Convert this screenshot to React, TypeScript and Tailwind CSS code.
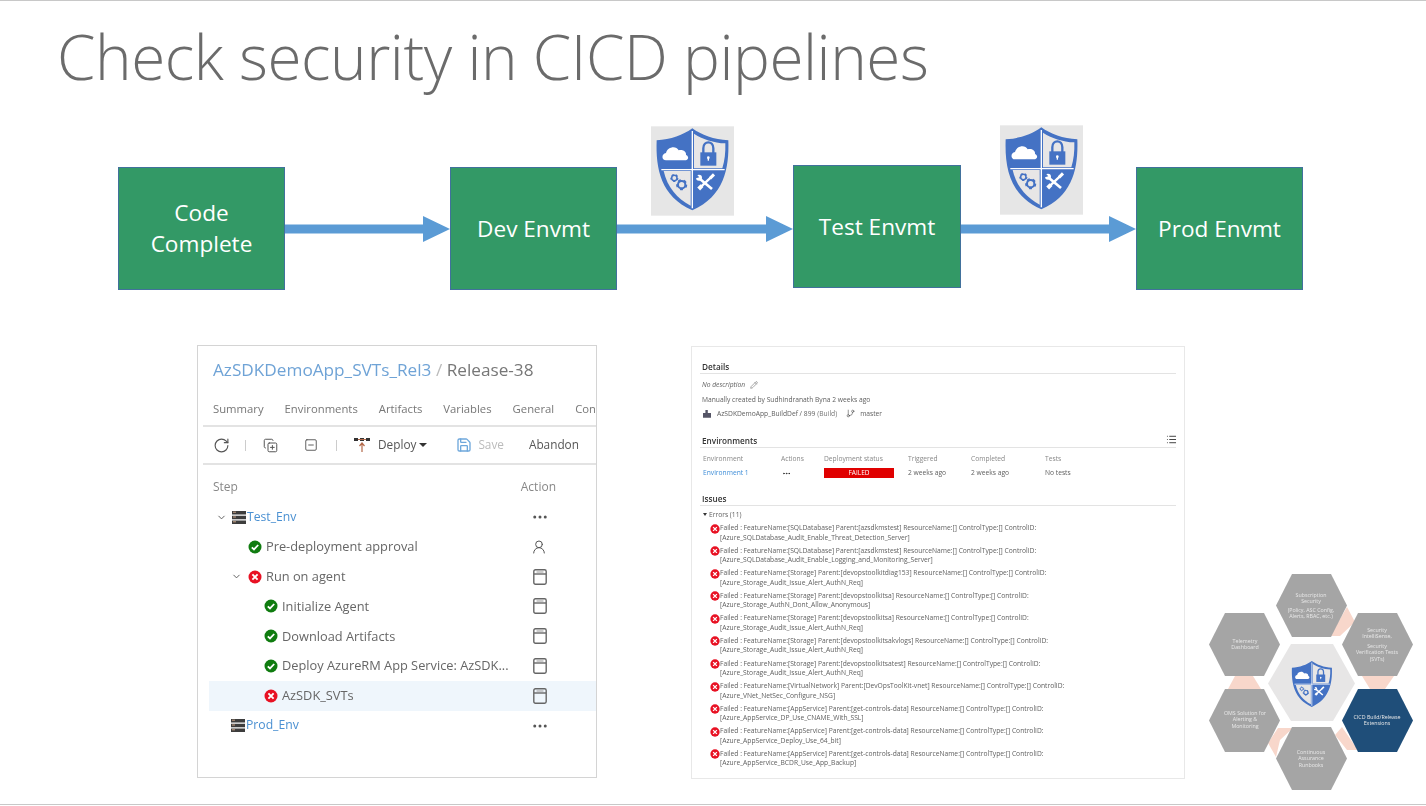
import { ChevronDown, CopyPlus, Ellipsis, GitBranch, List, Pencil, RotateCw, Save, SquareMinus, UserRound } from "lucide-react";

const shieldBlue = "#4472c4";

const Gear = ({ cx, cy, r }: { cx: number; cy: number; r: number }) => (
  <>
    <circle cx={cx} cy={cy} r={r} fill="none" stroke={shieldBlue} strokeWidth={r * 0.55} />
    <circle cx={cx} cy={cy} r={r * 1.3} fill="none" stroke={shieldBlue} strokeWidth={r * 0.45} strokeDasharray={`${r * 0.8} ${r * 0.84}`} />
  </>
);

const Shield = () => (
  <>
    <path d="M157 28C130 48 92 62 50 64C47 150 62 232 157 274C252 232 268 150 265 64C222 62 184 48 157 28Z" fill={shieldBlue} />
    <path d="M162 44C186 60 222 72 256 73C257 100 254 126 247 148H162Z" fill="#e7e6e6" />
    <path d="M71 156H152V260C110 238 82 204 71 156Z" fill="#e7e6e6" />
    <path d="M157 36V268M64 152H254" stroke="#fff" strokeWidth="4" />
    <path d="M78 124C64 124 64 104 78 102C82 84 108 78 116 94C128 90 140 98 138 108C148 112 146 124 134 124Z" fill="#fff" />
    <path d="M190 102V88C190 64 220 64 220 88V102" fill="none" stroke={shieldBlue} strokeWidth="7" />
    <rect x="181" y="100" width="48" height="40" fill={shieldBlue} />
    <circle cx="205" cy="116" r="4" fill="#fff" />
    <rect x="203" y="116" width="4" height="9" fill="#fff" />
    <Gear cx={103} cy={177} r={8} />
    <Gear cx={125} cy={197} r={11} />
    <path d="M180 180L216 210" stroke="#fff" strokeWidth="8" />
    <path d="M212 176L180 206" stroke="#fff" strokeWidth="7" />
    <path d="M186 200L176 210" stroke="#fff" strokeWidth="12" />
    <path d="M222 166L210 178" stroke="#fff" strokeWidth="9" />
    <circle cx="177" cy="176" r="9" fill="#fff" />
    <path d="M168 164L178 175L168 178Z" fill={shieldBlue} />
  </>
);

const ShieldTile = () => (
  <svg viewBox="33 22 249 268" className="block h-[90px] w-[83px] blur-[0.4px]">
    <rect x="33" y="22" width="249" height="268" fill="#e6e6e6" />
    <Shield />
  </svg>
);

const Arrow = ({ width }: { width: number }) => (
  <svg width={width} height="28" viewBox={`0 0 ${width} 28`} className="block">
    <path d={`M0 9.5H${width - 27}V1L${width} 14L${width - 27} 27V18.5H0Z`} fill="#5b9bd5" />
  </svg>
);

const Box = ({ label, className = "" }: { label: string; className?: string }) => (
  <div className={`flex h-[123px] w-[167px] shrink-0 items-center justify-center border border-[#41719c] bg-[#339966] px-4 text-center text-[22.6px] leading-[31px] text-white ${className}`}>
    {label}
  </div>
);

const Ok = () => (
  <svg width="14" height="14" viewBox="0 0 14 14" className="shrink-0">
    <circle cx="7" cy="7" r="6.5" fill="#107c10" />
    <path d="M3.8 7.3L6 9.4L10.2 5" fill="none" stroke="#fff" strokeWidth="1.8" />
  </svg>
);

const Fail = ({ size = 14 }: { size?: number }) => (
  <svg width={size} height={size} viewBox="0 0 14 14" className="shrink-0">
    <circle cx="7" cy="7" r="6.5" fill="#e81123" />
    <path d="M4.4 4.4L9.6 9.6M9.6 4.4L4.4 9.6" stroke="#fff" strokeWidth="1.9" />
  </svg>
);

const ServerIcon = () => (
  <svg width="14" height="15" viewBox="0 0 14 15" className="shrink-0">
    <path d="M0 1h14v3.4H0zM0 5.8h14v3.4H0zM0 10.6h14V14H0z" fill="#3d3d3d" />
    <path d="M1 2.2h3M1 7h3M1 11.8h3" stroke="#c9a184" strokeWidth="1" />
  </svg>
);

const LogIcon = () => (
  <svg width="14" height="16" viewBox="0 0 14 16" className="shrink-0">
    <rect x="0.8" y="0.8" width="12.4" height="14.4" rx="1.6" fill="none" stroke="#666" strokeWidth="1.4" />
    <path d="M1 5h12" stroke="#666" strokeWidth="1.4" />
    <path d="M3.5 3h7" stroke="#aaa" strokeWidth="1.2" />
  </svg>
);

const DeployIcon = () => (
  <svg width="16" height="16" viewBox="0 0 16 16" className="shrink-0">
    <path d="M0 1h4v3H0zM6 1h4v3H6zM12 1h4v3h-4z" fill="#333" />
    <path d="M4 2.5h8M8 15V7M5.5 9L8 6l2.5 3" fill="none" stroke="#b3694a" strokeWidth="1.2" />
  </svg>
);

const steps = [
  { label: "Pre-deployment approval", indent: "pl-[39px]", icon: <Ok />, action: <UserRound size={16} strokeWidth={1.5} className="text-[#555]" /> },
  { label: "Run on agent", indent: "pl-[22px]", caret: true, icon: <Fail />, action: <LogIcon /> },
  { label: "Initialize Agent", indent: "pl-[55px]", icon: <Ok />, action: <LogIcon /> },
  { label: "Download Artifacts", indent: "pl-[55px]", icon: <Ok />, action: <LogIcon /> },
  { label: "Deploy AzureRM App Service: AzSDK...", indent: "pl-[55px]", icon: <Ok />, action: <LogIcon /> },
  { label: "AzSDK_SVTs", indent: "pl-[55px]", icon: <Fail />, action: <LogIcon />, selected: true },
];

const ReleasePanel = () => (
  <div className="h-[433px] w-[400px] shrink-0 overflow-hidden border border-[#d4d4d4] bg-white pt-[12px] text-[#666] blur-[0.5px]">
    <div className="whitespace-nowrap pl-[15px] text-[17.2px] leading-[23px]">
      <span className="text-[#6fa3d6]">AzSDKDemoApp_SVTs_Rel3</span>
      <span className="text-[#bbb]"> / </span>
      <span className="text-[#777]">Release-38</span>
    </div>
    <div className="ml-[5px] mt-[19px] flex h-[27px] gap-[21px] whitespace-nowrap border-b-2 border-[#e3e3e3] pl-[10px] text-[11.3px] leading-[17px] text-[#777]">
      <span>Summary</span>
      <span>Environments</span>
      <span>Artifacts</span>
      <span>Variables</span>
      <span>General</span>
      <span>Con</span>
    </div>
    <div className="ml-[5px] flex h-[38px] items-center whitespace-nowrap border-b-2 border-[#e3e3e3] pl-[10px] text-[11.8px]">
      <RotateCw size={17} strokeWidth={1.6} className="text-[#555]" />
      <span className="ml-[15px] h-[11px] w-px bg-[#ccc]" />
      <CopyPlus size={15} strokeWidth={1.6} className="ml-[17px] text-[#555]" />
      <SquareMinus size={14} strokeWidth={1.6} className="ml-[26px] text-[#555]" />
      <span className="ml-[18px] h-[11px] w-px bg-[#ccc]" />
      <span className="ml-[17px]"><DeployIcon /></span>
      <span className="ml-[8px] text-[#555]">Deploy</span>
      <span className="ml-[3px] h-0 w-0 border-x-[4px] border-t-[4px] border-x-transparent border-t-[#333]" />
      <Save size={16} strokeWidth={2} className="ml-[29px] text-[#6fa8dc]" />
      <span className="ml-[6px] text-[#bbb]">Save</span>
      <span className="ml-[25px] text-[#555]">Abandon</span>
    </div>
    <div className="mt-[7px] flex h-[30px] items-center justify-between pl-[15px] pr-[40px] text-[12px] text-[#888]">
      <span>Step</span>
      <span>Action</span>
    </div>
    <div className="flex h-[30px] items-center pl-[18px] pr-[47px] text-[12.2px]">
      <ChevronDown size={11} className="mr-[5px] text-[#555]" />
      <ServerIcon />
      <span className="ml-px text-[#4a90d2]">Test_Env</span>
      <Ellipsis size={18} className="ml-auto text-[#555]" />
    </div>
    {steps.map((s) => (
      <div
        key={s.label}
        className={`ml-[11px] flex h-[29.75px] items-center pr-[49px] text-[12.8px] ${s.indent} ${s.selected ? "bg-[#eff6fc]" : ""}`}
      >
        {s.caret && <ChevronDown size={11} className="mr-[6px] text-[#555]" />}
        {s.icon}
        <span className="ml-[4px] whitespace-nowrap">{s.label}</span>
        <span className="ml-auto">{s.action}</span>
      </div>
    ))}
    <div className="flex h-[30px] items-center pl-[33px] pr-[47px] text-[12.2px]">
      <ServerIcon />
      <span className="ml-px text-[#4a90d2]">Prod_Env</span>
      <Ellipsis size={18} className="ml-auto text-[#555]" />
    </div>
  </div>
);

const errors = [
  ["Failed : FeatureName:[SQLDatabase] Parent:[azsdkmstest] ResourceName:[] ControlType:[] ControlID:", "[Azure_SQLDatabase_Audit_Enable_Threat_Detection_Server]"],
  ["Failed : FeatureName:[SQLDatabase] Parent:[azsdkmstest] ResourceName:[] ControlType:[] ControlID:", "[Azure_SQLDatabase_Audit_Enable_Logging_and_Monitoring_Server]"],
  ["Failed : FeatureName:[Storage] Parent:[devopstoolkitdiag153] ResourceName:[] ControlType:[] ControlID:", "[Azure_Storage_Audit_Issue_Alert_AuthN_Req]"],
  ["Failed : FeatureName:[Storage] Parent:[devopstoolkitsa] ResourceName:[] ControlType:[] ControlID:", "[Azure_Storage_AuthN_Dont_Allow_Anonymous]"],
  ["Failed : FeatureName:[Storage] Parent:[devopstoolkitsa] ResourceName:[] ControlType:[] ControlID:", "[Azure_Storage_Audit_Issue_Alert_AuthN_Req]"],
  ["Failed : FeatureName:[Storage] Parent:[devopstoolkitsakvlogs] ResourceName:[] ControlType:[] ControlID:", "[Azure_Storage_Audit_Issue_Alert_AuthN_Req]"],
  ["Failed : FeatureName:[Storage] Parent:[devopstoolkitsatest] ResourceName:[] ControlType:[] ControlID:", "[Azure_Storage_Audit_Issue_Alert_AuthN_Req]"],
  ["Failed : FeatureName:[VirtualNetwork] Parent:[DevOpsToolKit-vnet] ResourceName:[] ControlType:[] ControlID:", "[Azure_VNet_NetSec_Configure_NSG]"],
  ["Failed : FeatureName:[AppService] Parent:[get-controls-data] ResourceName:[] ControlType:[] ControlID:", "[Azure_AppService_DP_Use_CNAME_With_SSL]"],
  ["Failed : FeatureName:[AppService] Parent:[get-controls-data] ResourceName:[] ControlType:[] ControlID:", "[Azure_AppService_Deploy_Use_64_bit]"],
  ["Failed : FeatureName:[AppService] Parent:[get-controls-data] ResourceName:[] ControlType:[] ControlID:", "[Azure_AppService_BCDR_Use_App_Backup]"],
];

const SectionHead = ({ label, className = "" }: { label: string; className?: string }) => (
  <div className={`flex h-[13px] items-center justify-between border-b border-[#e3e3e3] pl-[2px] text-[8.2px] font-semibold text-[#333] ${className}`}>
    {label}
  </div>
);

const SummaryPanel = () => (
  <div className="mt-px h-[433px] w-[494px] shrink-0 overflow-hidden border border-[#e8e8e8] bg-white px-[8px] pt-[14px] text-[6.7px] leading-[9.5px] text-[#606060] blur-[0.4px]">
    <SectionHead label="Details" />
    <div className="mt-[6px] flex items-center pl-[2px] italic">
      No description
      <Pencil size={8} strokeWidth={1.5} className="ml-[5px] text-[#555]" />
    </div>
    <div className="mt-[5px] pl-[2px]">Manually created by Sudhindranath Byna 2 weeks ago</div>
    <div className="mt-[5px] flex items-center pl-[3px]">
      <span className="h-[8px] w-[8px] bg-[#556] [clip-path:polygon(0_100%,0_40%,30%_40%,30%_0,60%_0,60%_40%,100%_40%,100%_100%)]" />
      <span className="ml-[6px]">AzSDKDemoApp_BuildDef / 899</span>
      <span className="ml-[2px] text-[#777]">(Build)</span>
      <GitBranch size={9} strokeWidth={1.5} className="ml-[9px] text-[#444]" />
      <span className="ml-[5px]">master</span>
    </div>
    <SectionHead label="Environments" className="mt-[16.5px]" />
    <div className="relative mt-[5.5px] grid grid-cols-[78px_43px_84px_63px_74px_1fr] pl-[3px] text-[#888]">
      <List size={11} strokeWidth={2} className="absolute -top-[20px] right-[-1px] text-[#333]" />
      <span>Environment</span>
      <span>Actions</span>
      <span>Deployment status</span>
      <span>Triggered</span>
      <span>Completed</span>
      <span>Tests</span>
    </div>
    <div className="mt-[5px] grid grid-cols-[78px_43px_84px_63px_74px_1fr] items-center pl-[3px]">
      <span className="text-[#3f8ed8]">Environment 1</span>
      <Ellipsis size={9} className="ml-[1px] text-[#222]" />
      <span className="mr-[14px] flex h-[10px] items-center justify-center bg-[#e00000] text-[6.5px] text-white">FAILED</span>
      <span>2 weeks ago</span>
      <span>2 weeks ago</span>
      <span>No tests</span>
    </div>
    <SectionHead label="Issues" className="mt-[14.5px]" />
    <div className="mt-[4.5px] flex items-center pl-[3px]">
      <span className="mr-[2px] h-0 w-0 border-x-[2.5px] border-t-[3px] border-x-transparent border-t-[#333]" />
      Errors (11)
    </div>
    <ul className="mt-[2.5px]">
      {errors.map((e, i) => (
        <li key={i} className="flex h-[22.6px] pl-[10px] pt-[1px]">
          <span className="mt-[0.5px]"><Fail size={10} /></span>
          <div className="whitespace-nowrap">
            <div>{e[0]}</div>
            <div>{e[1]}</div>
          </div>
        </li>
      ))}
    </ul>
  </div>
);

const HexText = ({ x, y, lines, fill = "#e8e8e8" }: { x: number; y: number; lines: string[]; fill?: string }) => (
  <text x={x} y={y} textAnchor="middle" fill={fill} fontSize="5.3">
    {lines.map((l, i) => (
      <tspan key={i} x={x} dy={i === 0 ? 0 : 6.4}>{l}</tspan>
    ))}
  </text>
);

const hex = (x: number, y: number) =>
  `${x},${y + 31.5} ${x + 16},${y} ${x + 55},${y} ${x + 71},${y + 31.5} ${x + 55},${y + 63} ${x + 16},${y + 63}`;

const HexWheel = () => (
  <svg width="226" height="234" viewBox="0 0 226 234" className="ml-[15px] mt-[225px] block shrink-0 font-['Open_Sans',sans-serif] blur-[0.3px]">
    <g fill="#f8d7cb">
      <polygon points="147,37 155,52 140,66 130,66" />
      <polygon points="162,106 194,106 185,119 170,119" />
      <polygon points="142,157 158,180 147,180 135,165" />
      <polygon points="78,158 93,158 80,170 76,187 68,173" />
      <polygon points="35,106 53,106 61,119 28,119" />
    </g>
    <polygon points={hex(76, 4)} fill="#a5a5a5" />
    <polygon points={hex(142, 43)} fill="#a5a5a5" />
    <polygon points={hex(9, 43)} fill="#a5a5a5" />
    <polygon points={hex(9, 119)} fill="#a5a5a5" />
    <polygon points={hex(142, 119)} fill="#1f4e79" />
    <polygon points={hex(76, 157)} fill="#a5a5a5" />
    <polygon points="68,113.5 91,74 133,74 155,113.5 133,151 91,151" fill="#e7e6e6" />
    <svg x="88" y="90" width="48" height="48" viewBox="40 22 236 258">
      <Shield />
    </svg>
    <HexText x={111} y={27} lines={["Subscription", "Security"]} />
    <HexText x={111} y={42} lines={["(Policy, ASC Config,", "Alerts, RBAC, etc.)"]} />
    <HexText x={177} y={62} lines={["Security", "IntelliSense,"]} />
    <HexText x={177} y={78} lines={["Security", "Verification Tests", "(SVTs)"]} />
    <HexText x={45} y={73} lines={["Telemetry", "Dashboard"]} />
    <HexText x={45} y={145} lines={["OMS Solution for", "Alerting &", "Monitoring"]} />
    <HexText x={177} y={149} lines={["CICD Build/Release", "Extensions"]} />
    <HexText x={111} y={184} lines={["Continuous", "Assurance", "Runbooks"]} />
  </svg>
);

export default function App() {
  return (
    <div className="h-[805px] w-[1426px] overflow-hidden border-y border-[#c8c8c8] bg-white font-['Open_Sans',sans-serif]">
      <h1 className="ml-[57px] mt-[15px] h-[80px] whitespace-nowrap text-[62px] font-light leading-[80px] tracking-[-0.45px] text-[#6b6b6b]">
        Check security in CICD pipelines
      </h1>
      <div className="ml-[118px] mt-[71px] flex items-center">
        <Box label="Code Complete" className="pb-[2px]" />
        <Arrow width={165} />
        <Box label="Dev Envmt" />
        <div className="relative">
          <div className="absolute -top-[89px] left-[34px]"><ShieldTile /></div>
          <Arrow width={176} />
        </div>
        <Box label="Test Envmt" className="-mt-[4px] w-[168px]" />
        <div className="relative">
          <div className="absolute -top-[90px] left-[39px]"><ShieldTile /></div>
          <Arrow width={175} />
        </div>
        <Box label="Prod Envmt" />
      </div>
      <div className="ml-[197px] mt-[55px] flex items-start">
        <ReleasePanel />
        <div className="ml-[94px]"><SummaryPanel /></div>
        <HexWheel />
      </div>
    </div>
  );
}
